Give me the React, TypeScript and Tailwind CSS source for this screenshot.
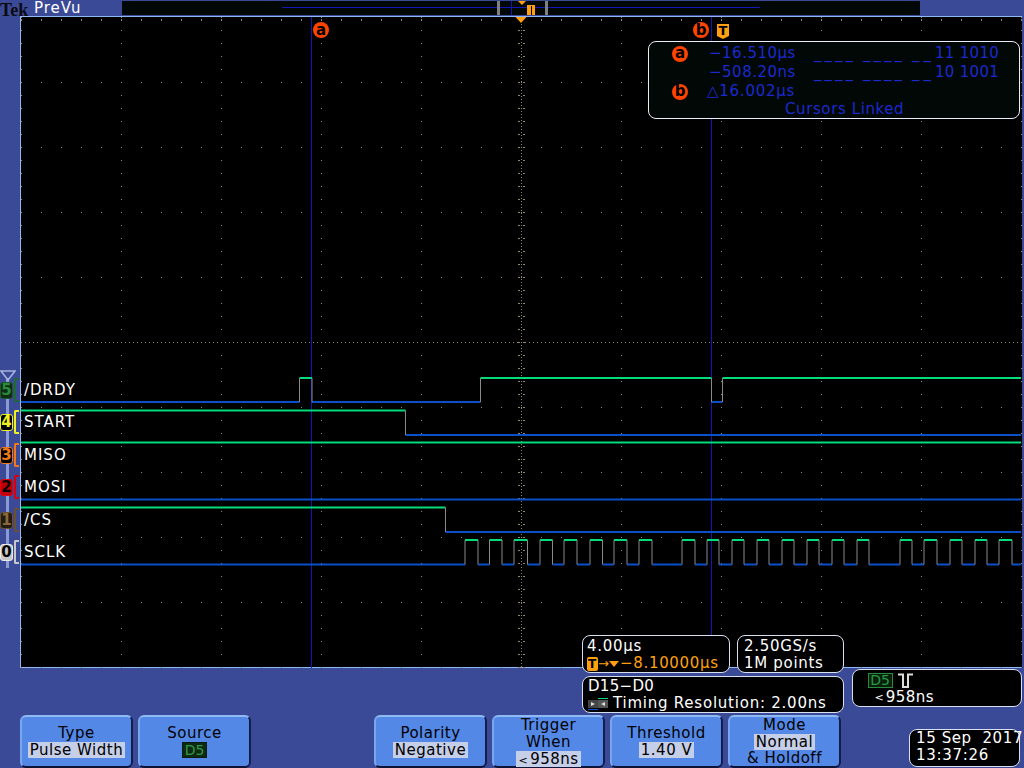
import React from "react";

const SCLK = [465, 478, 489.5, 502, 514, 527.5, 540, 552.5, 564, 577, 590, 602.5, 614, 627, 639, 652, 682, 695, 707, 719, 732, 744, 757, 769, 782, 794, 807, 819, 832, 844, 857, 869, 900, 912, 924, 937, 950, 962, 975, 987, 999, 1012];

const GREEN = "#00dc78";
const BLUE = "#0b50c8";
const EDGE = "#8a8a8a";

function Trace({ hi, lo, start, edges }: { hi: number; lo: number; start: boolean; edges: number[] }) {
  const xs = [21, ...edges, 1021];
  const parts: React.ReactNode[] = [];
  let high = start;
  for (let i = 0; i < xs.length - 1; i++) {
    const y = high ? hi : lo;
    parts.push(<rect key={`s${i}`} x={xs[i]} y={y - 1} width={xs[i + 1] - xs[i]} height={2} fill={high ? GREEN : BLUE} />);
    high = !high;
  }
  edges.forEach((x, i) => parts.push(<rect key={`e${i}`} x={x - 0.5} y={hi} width={1} height={lo - hi} fill={EDGE} />));
  return <g>{parts}</g>;
}

function Scope() {
  const dots: React.ReactNode[] = [];
  const gray = "#8c8c78";
  const tan = "#8f8668";
  for (let x = 21; x <= 1021; x += 100) {
    if (x === 521) continue;
    for (let y = 17; y <= 667; y += 13) dots.push(<rect key={`v${x}-${y}`} x={x} y={y} width={1} height={1} fill={gray} />);
  }
  for (let y = 17; y <= 667; y += 65) {
    for (let x = 21; x <= 1021; x += 20) dots.push(<rect key={`h${x}-${y}`} x={x} y={y + (y === 17 ? 2 : 0)} width={1} height={y === 17 || y === 667 ? 2 : 1} fill={gray} />);
  }
  for (let x = 21; x <= 1021; x += 4) dots.push(<rect key={`c${x}`} x={x} y={342} width={1} height={1} fill={gray} />);
  for (let y = 24; y <= 667; y += 3) dots.push(<rect key={`m${y}`} x={521} y={y} width={1} height={1} fill={tan} />);
  for (let y = 30; y <= 667; y += 13) {
    dots.push(<rect key={`xl${y}`} x={518} y={y} width={2} height={1} fill={tan} />);
    dots.push(<rect key={`xr${y}`} x={523} y={y} width={2} height={1} fill={tan} />);
  }
  return (
    <svg className="absolute inset-0 w-full h-full" viewBox="20 16 1002 652">
      {dots}
      <rect x={311} y={17} width={1} height={651} fill="#1616b4" />
      <rect x={711} y={17} width={1} height={651} fill="#1616b4" />
      <polygon points="515.5,17 526.5,17 521,23" fill="#ffa010" />
      <Trace hi={378} lo={402} start={false} edges={[299.5, 312, 480.5, 711.5, 722.5]} />
      <Trace hi={410.5} lo={435} start={true} edges={[405.5]} />
      <Trace hi={442.5} lo={467} start={true} edges={[]} />
      <Trace hi={475} lo={499.5} start={false} edges={[]} />
      <Trace hi={507.5} lo={532} start={true} edges={[445.5]} />
      <Trace hi={540} lo={564.5} start={false} edges={SCLK} />
    </svg>
  );
}

function Circle({ l }: { l: string }) {
  return (
    <span className="flex items-center justify-center w-4 h-4 rounded-full bg-[#ff4400] text-black text-[15px] leading-none font-bold tracking-normal">
      {l}
    </span>
  );
}

function TMark({ className }: { className: string }) {
  return (
    <span className={`flex items-start justify-center bg-[#ffa010] text-black font-bold leading-none [clip-path:polygon(0_0,100%_0,100%_80%,50%_100%,0_80%)] ${className}`}>T</span>
  );
}

function Value({ children }: { children: React.ReactNode }) {
  return <span className="bg-[#c6cfe8] px-[2px] h-4 leading-4 inline-block">{children}</span>;
}

function Btn({ children, tall }: { children: React.ReactNode; tall?: boolean }) {
  return (
    <div className={`w-[113px] h-[53px] rounded-[6px] border-2 border-t-[#8fb9f2] border-l-[#7aa6ee] border-r-[#141c48] border-b-[#0e1438] bg-[#5488e6] text-black flex flex-col items-center justify-center leading-[17px] text-[15px] tracking-[0.5px] ${tall ? "pt-[1px]" : "pb-[1px]"}`}>
      {children}
    </div>
  );
}

function Box({ className, children }: { className: string; children: React.ReactNode }) {
  return <div className={`bg-black border border-[#d8e0f0] rounded-[8px] text-white text-[15px] leading-[17px] tracking-[0.7px] ${className}`}>{children}</div>;
}

function Bits({ value }: { value: string }) {
  return (
    <span className="flex">
      <span className="tracking-[3px] w-[49px]">____</span>
      <span className="tracking-[3px] w-[49px]">____</span>
      <span className="tracking-[4px] w-[23px]">__</span>
      <span className="tracking-[0.3px]">{value}</span>
    </span>
  );
}

const CHANNELS = [
  { n: "5", y: 390, label: "/DRDY", tag: "bg-[#0e2c14] border-[#1c5a2a] text-[#2c8a3e]", br: "border-[#1f6a30]" },
  { n: "4", y: 422, label: "START", tag: "bg-black border-[#f0f020] text-[#f0f020]", br: "border-[#f0f020]" },
  { n: "3", y: 455, label: "MISO", tag: "bg-black border-[#f07818] text-[#f07818]", br: "border-[#f07818]" },
  { n: "2", y: 487, label: "MOSI", tag: "bg-[#c00008] border-[#e00010] text-black", br: "border-[#d80010]" },
  { n: "1", y: 520, label: "/CS", tag: "bg-[#241c10] border-[#6a5030] text-[#8a6a3c]", br: "border-[#6a5030]" },
  { n: "0", y: 552, label: "SCLK", tag: "bg-[#c8c8c8] border-[#e8e8e8] text-black", br: "border-[#c8c8c8]" },
];

export default function App() {
  return (
    <div className="w-[1024px] h-[768px] overflow-hidden bg-[#3b4a96] flex flex-col font-['DejaVu_Sans',sans-serif] select-none">
      {/* Top record-view strip */}
      <header className="h-4 flex shrink-0">
        <div className="w-[122px] flex items-center h-4">
          <span className="font-['Liberation_Serif',serif] font-bold text-[18px] leading-[21px] h-4 text-[#0a0a14] w-[34px] shrink-0">Tek</span>
          <span className="text-white text-[15px] leading-4 tracking-[1px]">PreVu</span>
        </div>
        <div className="w-[798px] h-[14px] mt-[1px] bg-[#020805] relative">
          <div className="absolute left-[160px] top-[6px] w-[478px] h-[1px] bg-[#1616b4]" />
          <div className="absolute left-[389px] top-0 w-[1px] h-[14px] bg-[#1616b4]" />
          <div className="absolute left-[375px] top-0 w-[3px] h-[14px] bg-[#808080]" />
          <div className="absolute left-[423px] top-0 w-[3px] h-[14px] bg-[#808080]" />
          <div className="absolute left-[396px] top-0 w-0 h-0 border-x-[4px] border-x-transparent border-t-[4px] border-t-[#ffa010]" />
          <div className="absolute left-[405px] top-[4px] w-2 h-[10px] bg-[#ffa010] flex justify-center">
            <div className="w-[1px] bg-black mt-[1px]" />
          </div>
        </div>
      </header>

      {/* Graticule row */}
      <main className="flex h-[652px] shrink-0">
        <aside className="w-5 relative shrink-0">
          <div className="absolute left-[6px] top-[362px] w-[3px] h-[190px] bg-[#8b9ad4]" />
          <svg className="absolute left-0 top-[354px]" width="16" height="12" viewBox="0 0 16 12">
            <polygon points="1,1 15,1 8,10" fill="none" stroke="#a8b4de" strokeWidth="1.5" />
          </svg>
          {CHANNELS.map((c) => (
            <div key={c.n} className="absolute left-0 h-[24px] w-5 flex items-center" style={{ top: c.y - 16 - 12 }}>
              <span className={`shrink-0 w-[13px] h-[17px] rounded-[3px] border flex items-center justify-center text-[15px] font-bold leading-none ${c.tag}`}>{c.n}</span>
              <span className={`shrink-0 ml-[1px] w-[5px] h-[24px] rounded-l-[2px] border-l-2 border-y-2 ${c.br}`} />
            </div>
          ))}
        </aside>
        <section className="relative w-[1002px] bg-black border-t border-l border-b border-[#8fb9f2]">
          <div className="absolute left-[-1px] top-[-1px] w-[1002px] h-[652px]">
            <Scope />
            {CHANNELS.map((c) => (
              <span key={c.label} className="absolute left-[4px] text-white text-[15px] leading-[17px] tracking-[1px]" style={{ top: c.y - 16 - 8 }}>
                {c.label}
              </span>
            ))}
            <div className="absolute left-[293px] top-[6px]"><Circle l="a" /></div>
            <div className="absolute left-[673px] top-[6px]"><Circle l="b" /></div>
            <TMark className="absolute left-[697px] top-[8px] w-3 h-[15px] text-[13px]" />
            <div className="absolute left-[628px] top-[25px] w-[372px] h-[78px] bg-[#020805] border border-[#e8eef8] rounded-[8px] text-[#1a2ad0] text-[15px] leading-[19px] tracking-[0.5px] pt-[2px]">
              <div className="flex items-center h-[19px]">
                <span className="w-[60px] pl-[23px]"><Circle l="a" /></span>
                <span className="w-[105px]">−16.510µs</span>
                <Bits value="11 1010" />
              </div>
              <div className="flex items-center h-[19px]">
                <span className="w-[60px]" />
                <span className="w-[105px]">−508.20ns</span>
                <Bits value="10 1001" />
              </div>
              <div className="flex items-center h-[19px]">
                <span className="w-[58px] pl-[23px]"><Circle l="b" /></span>
                <span className="tracking-[0.75px]">△16.002µs</span>
              </div>
              <div className="h-[18px] leading-[17px] pl-[136px] tracking-[0.6px]">Cursors Linked</div>
            </div>
          </div>
        </section>
      </main>

      {/* Bottom readouts and menu */}
      <footer className="relative flex-1 flex flex-col">
        <div className="flex mt-[-33px] h-[78px] ml-[582px] relative">
          <div className="flex flex-col w-[262px] gap-[3px]">
            <div className="flex gap-[7px]">
              <Box className="w-[148px] h-[38px] pl-[4px] pt-[2px]">
                <div>4.00µs</div>
                <div className="flex items-center text-[#ffa010]">
                  <span className="w-[11px] h-[14px] bg-[#ffa010] text-black text-[12px] font-bold leading-[14px] text-center rounded-[2px]">T</span>
                  <span className="text-[13px] tracking-normal">→</span>
                  <span className="w-0 h-0 border-x-[5px] border-x-transparent border-t-[6px] border-t-[#ffa010] mr-[1px]" />
                  <span>−8.10000µs</span>
                </div>
              </Box>
              <Box className="w-[107px] h-[38px] pl-[6px] pt-[2px]">
                <div>2.50GS/s</div>
                <div>1M points</div>
              </Box>
            </div>
            <Box className="h-[37px] pl-[5px] pt-[1px]">
              <div className="tracking-[0.3px]">D15−D0</div>
              <div className="flex items-center">
                <svg width="21" height="14" viewBox="0 0 21 14" className="mr-[4px]">
                  <rect x="0" y="3" width="10" height="8" fill="#444" />
                  <rect x="10" y="3" width="10" height="8" fill="#555" />
                  <polygon points="3,5 7,7 3,9" fill="#ddd" />
                  <polygon points="17,5 13,7 17,9" fill="#ddd" />
                  <rect x="10" y="1" width="10" height="1" fill="#00dc78" />
                  <rect x="0" y="12" width="10" height="1" fill="#0b50c8" />
                </svg>
                <span className="tracking-[0.77px]">Timing Resolution: 2.00ns</span>
              </div>
            </Box>
          </div>
          <Box className="w-[170px] h-[38px] ml-[7.5px] mt-[34px] pt-[2px]">
            <div className="flex items-center pl-[15px] h-[17px]">
              <span className="w-[25px] h-[15px] border border-[#2a8a3e] bg-[#06200c] text-[#2a9a44] text-[14px] leading-[13px] text-center tracking-normal">D5</span>
              <svg width="15" height="15" viewBox="0 0 15 15" className="ml-[5px]">
                <path d="M0 1.5 H5 V14 H10 V1.5 H15" fill="none" stroke="#ddd" strokeWidth="2" />
              </svg>
            </div>
            <div className="pl-[22px] flex items-center"><span className="text-[11px] mr-[2px] tracking-normal">&lt;</span><span className="tracking-[0.5px]">958ns</span></div>
          </Box>
        </div>
        <div className="flex mt-[2px] ml-5 items-end">
          <div className="flex gap-[5px]">
            <Btn>
              <span>Type</span>
              <Value>Pulse Width</Value>
            </Btn>
            <Btn>
              <span>Source</span>
              <span className="w-[25px] h-4 bg-[#0f2a14] border border-[#0a1c0e] text-[#2f9a45] text-[14px] leading-[14px] text-center tracking-normal">D5</span>
            </Btn>
          </div>
          <div className="flex gap-[5px] ml-[123px]">
            <Btn>
              <span>Polarity</span>
              <Value>Negative</Value>
            </Btn>
            <Btn tall>
              <span>Trigger</span>
              <span>When</span>
              <Value><span className="text-[11px] mr-[2px]">&lt;</span>958ns</Value>
            </Btn>
            <Btn>
              <span>Threshold</span>
              <Value>1.40 V</Value>
            </Btn>
            <Btn tall>
              <span>Mode</span>
              <Value>Normal</Value>
              <span>&amp; Holdoff</span>
            </Btn>
          </div>
          <Box className="w-[111px] h-[38px] ml-[68px] mb-[1px] pl-[6px]">
            <div className="whitespace-pre tracking-[0.6px]">15 Sep  2017</div>
            <div>13:37:26</div>
          </Box>
        </div>
      </footer>
    </div>
  );
}
